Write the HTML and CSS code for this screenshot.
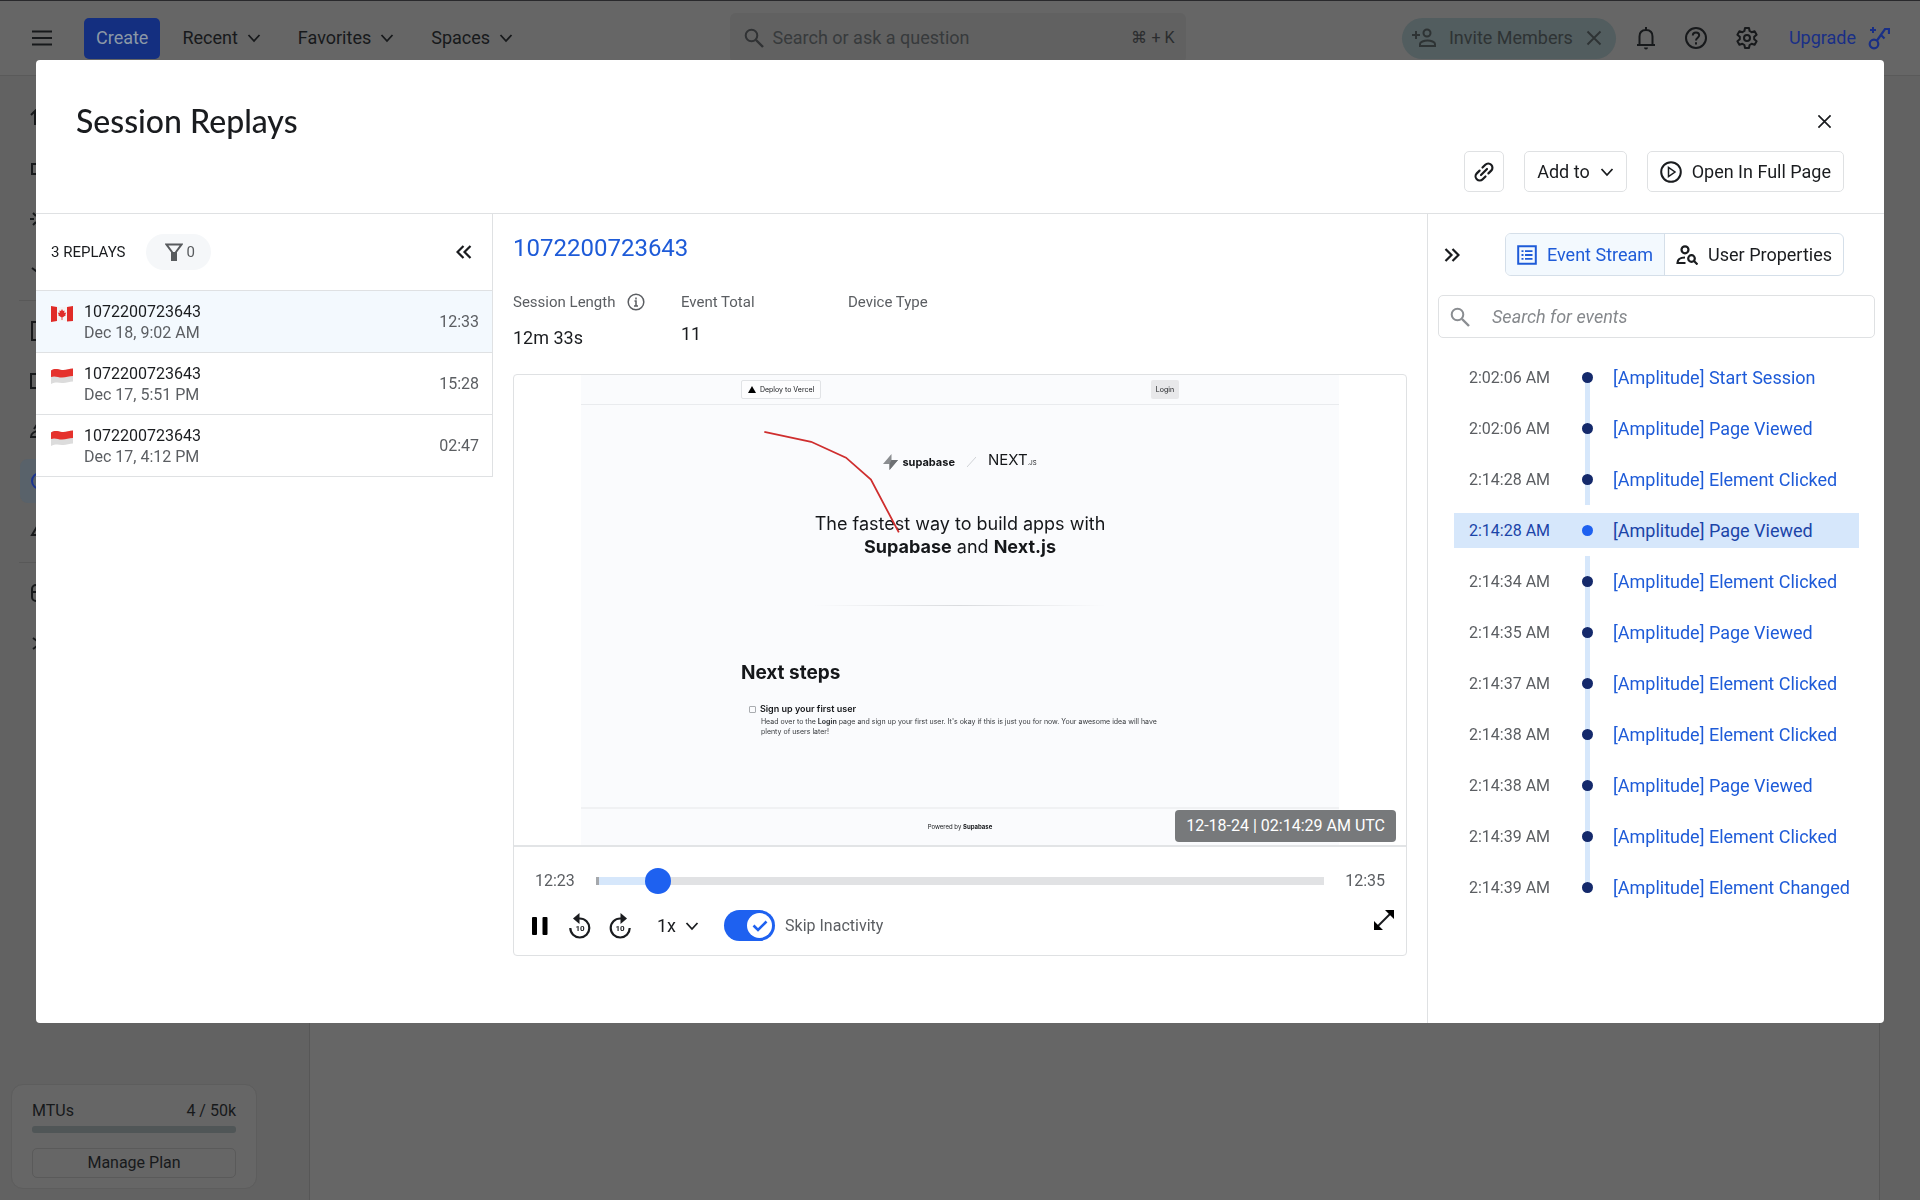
FILE: index.html
```html
<!DOCTYPE html>
<html lang="en">

<head>
    <meta charset="UTF-8">
    <meta name="viewport" content="width=device-width, initial-scale=1.0">
    <title>Session Replays</title>
    <link rel="stylesheet" href="styles.css">
</head>

<body>
    <!-- Shared icons -->
    <svg class="sprite" aria-hidden="true">
        <symbol id="chevron" viewBox="0 0 14 14"><path d="M1.500 4l5.500 6 5.500-6" fill="none" stroke="currentColor" stroke-width="1.800" /></symbol>
        <symbol id="cross" viewBox="0 0 16 16"><path d="M1.500 1.500l13 13M14.500 1.500l-13 13" fill="none" stroke="currentColor" stroke-width="1.800" /></symbol>
        <symbol id="search" viewBox="0 0 20 20"><circle cx="7.500" cy="7.500" r="5.800" fill="none" stroke="currentColor" stroke-width="2" /><path d="M12 12l7 7" stroke="currentColor" stroke-width="2.400" /></symbol>
        <symbol id="flag-id" viewBox="0 0 22 16">
            <path d="M0 2.500C4 0 7 1.500 11 2s7-1.500 11-1.500v13c-4 0-7 2-11 1.500S4 14 0 16z" fill="#dcdcdc" />
            <path d="M0 2.500C4 0 7 1.500 11 2s7-1.500 11-1.500V8c-4 0-7 1.500-11 1.500S4 7.500 0 9z" fill="#e5322d" />
        </symbol>
        <symbol id="ten" viewBox="0 0 24 26">
            <path d="M2.300 15a9.500 9.500 0 1 0 9.500-9.500H9" fill="none" stroke="currentColor" stroke-width="2.200" />
            <path d="M11.500 0v11L5 5.500z" fill="currentColor" />
        </symbol>
    </svg>

    <header class="topbar">
        <button class="icon-btn menu" aria-label="Menu">
            <svg width="20" height="16" viewBox="0 0 20 16"><path d="M0 1.500h20M0 8h20M0 14.500h20" stroke="currentColor" stroke-width="2" /></svg>
        </button>
        <button class="create">Create</button>
        <nav class="top-nav">
            <button>Recent <svg width="14" height="14"><use href="#chevron" /></svg></button>
            <button>Favorites <svg width="14" height="14"><use href="#chevron" /></svg></button>
            <button>Spaces <svg width="14" height="14"><use href="#chevron" /></svg></button>
        </nav>
        <div class="top-search">
            <svg width="20" height="20"><use href="#search" /></svg>
            <input type="text" aria-label="Search" placeholder="Search or ask a question">
            <span class="shortcut">⌘ + K</span>
        </div>
        <div class="top-actions">
            <div class="invite">
                <svg width="24" height="22" viewBox="0 0 24 22" fill="none" stroke="currentColor" stroke-width="2"><circle cx="15" cy="6" r="3.500" /><path d="M8 19v-2c0-2 4-3.500 7.500-3.500S23 15 23 17v2zM0 8h8M4 4v8" /></svg>
                <button>Invite Members</button>
                <button class="icon-btn" aria-label="Dismiss"><svg width="16" height="16"><use href="#cross" /></svg></button>
            </div>
            <button class="icon-btn" aria-label="Notifications">
                <svg width="22" height="24" viewBox="0 0 22 24" fill="none" stroke="currentColor" stroke-width="2"><path d="M2 19h18M4.500 19V10.500C4.500 6.500 7 4 11 4s6.500 2.500 6.500 6.500V19M11 1v3" /><path d="M9 21.500h4a2 2 0 0 1-4 0z" fill="currentColor" stroke="none" /></svg>
            </button>
            <button class="icon-btn" aria-label="Help">
                <svg width="24" height="24" viewBox="0 0 24 24" fill="none" stroke="currentColor" stroke-width="2"><circle cx="12" cy="12" r="10" /><path d="M8.800 9.500C8.800 7.500 10 6.500 12 6.500s3.200 1.200 3.200 2.800c0 2.200-3.200 2.600-3.200 5.200M12 16.200v2.200" /></svg>
            </button>
            <button class="icon-btn" aria-label="Settings">
                <svg width="24" height="24" viewBox="0 0 24 24" fill="none" stroke="currentColor" stroke-width="2" stroke-linejoin="round"><path d="M10 2h4l.6 3 2 1.200 3-1 2 3.500-2.400 2v2.600l2.400 2-2 3.500-3-1-2 1.200-.6 3h-4l-.6-3-2-1.200-3 1-2-3.500 2.400-2v-2.600l-2.400-2 2-3.500 3 1 2-1.200z" /><circle cx="12" cy="12" r="3" /></svg>
            </button>
            <a class="upgrade" href="#">Upgrade
                <svg width="22" height="24" viewBox="0 0 22 24" fill="none" stroke="currentColor" stroke-width="2.200"><circle cx="6" cy="18" r="4.300" /><path d="M9 14.500L17 3h4v5M13 9l3.500 3.500" /><path d="M5 1v6M2 4h6" stroke-width="2" /></svg>
            </a>
        </div>
    </header>

    <div class="page">
        <aside class="sidebar">
            <nav class="side-nav">
                <a href="#" aria-label="Project"><svg width="20" height="20" viewBox="0 0 20 20"><path d="M1 6l4-4v14M9 3h9v14H9z" /></svg></a>
                <a href="#" aria-label="Home"><svg width="20" height="20" viewBox="0 0 20 20"><path d="M2 5h16v10H2z" /></svg></a>
                <a href="#" aria-label="Explore"><svg width="20" height="20" viewBox="0 0 20 20"><path d="M0 10h4M3 4l3 3M3 16l3-3" /><circle cx="11" cy="10" r="4" /></svg></a>
                <a href="#" aria-label="Launch"><svg width="20" height="20" viewBox="0 0 20 20"><path d="M2 9l4 3 10-8" /></svg></a>
                <hr>
                <a href="#" aria-label="Dashboards"><svg width="20" height="20" viewBox="0 0 20 20"><path d="M2 1h16v18H2z" /></svg></a>
                <a href="#" aria-label="Content"><svg width="20" height="20" viewBox="0 0 20 20"><path d="M1 3h18v14H1z" /></svg></a>
                <a href="#" aria-label="Users"><svg width="20" height="20" viewBox="0 0 20 20"><path d="M1 16c0-4 4-6 8-6s8 2 8 6zM4 8l4-6" /></svg></a>
                <a class="active" href="#" aria-label="Session Replay"><svg width="20" height="20" viewBox="0 0 20 20"><circle cx="10" cy="10" r="8" /></svg></a>
                <a href="#" aria-label="Experiment"><svg width="20" height="20" viewBox="0 0 20 20"><path d="M2 14l6-10 6 10z" /></svg></a>
                <hr>
                <a href="#" aria-label="Data"><svg width="20" height="20" viewBox="0 0 20 20"><rect x="2" y="2" width="16" height="16" rx="4" /><path d="M2 9h16" /></svg></a>
                <a href="#" aria-label="Audiences"><svg width="20" height="20" viewBox="0 0 20 20"><path d="M3 5l4 3M3 16l4-3" /></svg></a>
            </nav>
            <div class="plan-card">
                <div class="plan-row"><span>MTUs</span><span>4 / 50k</span></div>
                <div class="plan-bar"></div>
                <button>Manage Plan</button>
            </div>
        </aside>
        <main class="content"></main>
    </div>

    <div class="overlay">
        <div class="modal" role="dialog" aria-label="Session Replays">
            <div class="modal-header">
                <div class="title-row">
                    <h1>Session Replays</h1>
                    <button class="icon-btn close" aria-label="Close"><svg width="15" height="15"><use href="#cross" /></svg></button>
                </div>
                <div class="header-actions">
                    <button class="btn link" aria-label="Copy link">
                        <svg width="20" height="20" viewBox="0 0 20 20" fill="none" stroke="currentColor" stroke-width="2.200" stroke-linecap="round"><path d="M8.500 5.500l2.800-2.800a4 4 0 0 1 5.900 5.900l-2.800 2.800M11.500 14.500l-2.800 2.800a4 4 0 0 1-5.900-5.900l2.800-2.800M7 13l6-6" /></svg>
                    </button>
                    <button class="btn">Add to <svg width="14" height="14"><use href="#chevron" /></svg></button>
                    <button class="btn">
                        <svg width="22" height="22" viewBox="0 0 22 22" fill="none" stroke="currentColor" stroke-width="2"><circle cx="11" cy="11" r="9.800" /><path d="M8.500 6.500v9l6.500-4.500z" stroke-width="1.500" /></svg>
                        Open In Full Page
                    </button>
                </div>
            </div>

            <div class="modal-body">
                <section class="replays">
                    <div class="replays-head">
                        <span>3 REPLAYS</span>
                        <button class="filter" aria-label="Filters">
                            <svg width="18" height="18" viewBox="0 0 18 18"><path d="M1.500 1.500h15L11 9v8H7V9z" fill="none" stroke="currentColor" stroke-width="2" /><path d="M7 9h4v8H7z" fill="currentColor" /></svg>0
                        </button>
                        <button class="icon-btn collapse" aria-label="Collapse list">
                            <svg width="16" height="14" viewBox="0 0 16 14"><path d="M7.500 1l-6 6 6 6M14.500 1l-6 6 6 6" fill="none" stroke="currentColor" stroke-width="2.200" /></svg>
                        </button>
                    </div>
                    <ul class="replay-list">
                        <li class="selected">
                            <svg class="flag" width="22" height="16" viewBox="0 0 22 16"><path d="M0 1h22v14H0z" fill="#f3f3f3" /><path d="M0 0l6 1v14l-6 1zM16 1l6-1v15l-6 .5z" fill="#e02b27" /><path d="M11 3l1 2 1.500-.5-.2 2.500 2-.5-1 2 .5.800-3 2h-.4V14h-.8v-2.700h-.4l-3-2 .5-.8-1-2 2 .5L8.500 4.500 10 5z" fill="#e02b27" /></svg>
                            <div class="who"><strong>1072200723643</strong><span>Dec 18, 9:02 AM</span></div>
                            <span class="length">12:33</span>
                        </li>
                        <li>
                            <svg class="flag" width="22" height="16"><use href="#flag-id" /></svg>
                            <div class="who"><strong>1072200723643</strong><span>Dec 17, 5:51 PM</span></div>
                            <span class="length">15:28</span>
                        </li>
                        <li>
                            <svg class="flag" width="22" height="16"><use href="#flag-id" /></svg>
                            <div class="who"><strong>1072200723643</strong><span>Dec 17, 4:12 PM</span></div>
                            <span class="length">02:47</span>
                        </li>
                    </ul>
                </section>

                <section class="detail">
                    <h2><a href="#">1072200723643</a></h2>
                    <dl class="stats">
                        <div>
                            <dt class="with-info">Session Length
                                <svg width="18" height="18" viewBox="0 0 18 18" fill="none" stroke="currentColor" stroke-width="1.500"><circle cx="9" cy="9" r="7.800" /><path d="M7.500 8H9v5M7 13h4M9 4.500v2" /></svg>
                            </dt>
                            <dd>12m 33s</dd>
                        </div>
                        <div><dt>Event Total</dt><dd>11</dd></div>
                        <div><dt>Device Type</dt></div>
                    </dl>

                    <div class="player">
                        <div class="stage">
                            <div class="site">
                                <div class="site-top">
                                    <button class="deploy"><svg width="8" height="7" viewBox="0 0 8 7"><path d="M4 0l4 7H0z" /></svg>Deploy to Vercel</button>
                                    <button class="login">Login</button>
                                </div>
                                <div class="site-main">
                                    <div class="logos">
                                        <svg width="15" height="16" viewBox="0 0 15 16"><path d="M8.500 0v6H15L6.500 16v-6H0z" fill="#8a8d90" /><path d="M8.500 6H15L6.500 16v-6z" fill="#6d7073" /></svg>
                                        <b>supabase</b>
                                        <svg class="slash" width="9" height="10" viewBox="0 0 9 10"><path d="M0 10l9-10" stroke="#cfd2d6" /></svg>
                                        <span class="next">NEXT<small>.JS</small></span>
                                    </div>
                                    <p class="tagline">The fastest way to build apps with <b>Supabase</b> and <b>Next.js</b></p>
                                    <div class="rule"></div>
                                    <div class="steps">
                                        <h3>Next steps</h3>
                                        <label><input type="checkbox">Sign up your first user</label>
                                        <p>Head over to the <b>Login</b> page and sign up your first user. It's okay if this is just you for now. Your awesome idea will have plenty of users later!</p>
                                    </div>
                                </div>
                                <div class="site-foot">Powered by <b>Supabase</b></div>
                                <svg class="trail" viewBox="0 0 761 468"><path d="M184 57l47 10 35 16 25 22 28 53" fill="none" stroke="#cf2e2e" stroke-width="1.800" /></svg>
                            </div>
                            <div class="stamp">12-18-24 | 02:14:29 AM UTC</div>
                        </div>
                        <div class="controls">
                            <div class="timeline">
                                <span>12:23</span>
                                <input type="range" min="0" max="100" value="7" aria-label="Playback position">
                                <span>12:35</span>
                            </div>
                            <div class="buttons">
                                <button class="icon-btn" aria-label="Pause"><svg width="20" height="18" viewBox="0 0 20 18"><rect width="5" height="18" rx="1" /><rect x="10.500" width="5" height="18" rx="1" /></svg></button>
                                <button class="icon-btn seek" aria-label="Back 10 seconds">
                                    <svg width="24" height="26"><use href="#ten" /></svg><span>10</span>
                                </button>
                                <button class="icon-btn seek" aria-label="Forward 10 seconds">
                                    <svg class="flip" width="24" height="26"><use href="#ten" /></svg><span>10</span>
                                </button>
                                <button class="speed">1x <svg width="14" height="14"><use href="#chevron" /></svg></button>
                                <label class="toggle">
                                    <input type="checkbox" checked>
                                    <span class="switch"><span class="knob"><svg width="16" height="12" viewBox="0 0 16 12"><path d="M1.500 5.500l4.500 4.500L14.500 1.500" fill="none" stroke="#1e61f0" stroke-width="2.600" /></svg></span></span>
                                    Skip Inactivity
                                </label>
                                <button class="icon-btn expand" aria-label="Fullscreen"><svg width="20" height="20" viewBox="0 0 20 20"><path d="M3 17L17 3" stroke="currentColor" stroke-width="2" /><path d="M11 0h9v9zM0 11v9h9z" /></svg></button>
                            </div>
                        </div>
                    </div>
                </section>

                <section class="events">
                    <div class="events-head">
                        <button class="icon-btn" aria-label="Collapse events">
                            <svg width="16" height="14" viewBox="0 0 16 14"><path d="M1.500 1l6 6-6 6M8.500 1l6 6-6 6" fill="none" stroke="currentColor" stroke-width="2.200" /></svg>
                        </button>
                        <div class="tabs">
                            <button class="active">
                                <svg width="20" height="20" viewBox="0 0 20 20" fill="none" stroke="currentColor" stroke-width="2"><path d="M1.200 1.200h17.600v17.600H1.200z" /><path d="M4.500 6.200h2M8 6.200h7.500M4.500 10h2M8 10h7.500M4.500 13.800h2M8 13.800h7.500" stroke-width="1.800" /></svg>
                                Event Stream
                            </button>
                            <button>
                                <svg width="22" height="20" viewBox="0 0 22 20" fill="none" stroke="currentColor" stroke-width="2.200"><circle cx="9" cy="4.800" r="3.500" /><circle cx="15.500" cy="13.500" r="3.300" /><path d="M18 16l3.500 3.500M9.500 18H1.500c0-4 3.500-5.500 7.500-5.500" /></svg>
                                User Properties
                            </button>
                        </div>
                    </div>
                    <div class="event-search">
                        <svg width="20" height="20"><use href="#search" /></svg>
                        <input type="text" aria-label="Search for events" placeholder="Search for events">
                    </div>
                    <ol class="event-list">
                        <li><time>2:02:06 AM</time><i></i><a href="#">[Amplitude] Start Session</a></li>
                        <li><time>2:02:06 AM</time><i></i><a href="#">[Amplitude] Page Viewed</a></li>
                        <li><time>2:14:28 AM</time><i></i><a href="#">[Amplitude] Element Clicked</a></li>
                        <li class="current"><time>2:14:28 AM</time><i></i><a href="#">[Amplitude] Page Viewed</a></li>
                        <li><time>2:14:34 AM</time><i></i><a href="#">[Amplitude] Element Clicked</a></li>
                        <li><time>2:14:35 AM</time><i></i><a href="#">[Amplitude] Page Viewed</a></li>
                        <li><time>2:14:37 AM</time><i></i><a href="#">[Amplitude] Element Clicked</a></li>
                        <li><time>2:14:38 AM</time><i></i><a href="#">[Amplitude] Element Clicked</a></li>
                        <li><time>2:14:38 AM</time><i></i><a href="#">[Amplitude] Page Viewed</a></li>
                        <li><time>2:14:39 AM</time><i></i><a href="#">[Amplitude] Element Clicked</a></li>
                        <li><time>2:14:39 AM</time><i></i><a href="#">[Amplitude] Element Changed</a></li>
                    </ol>
                </section>
            </div>
        </div>
    </div>
</body>

</html>
```
FILE: styles.css
```css
* {
    margin: 0;
    padding: 0;
    box-sizing: border-box;
}

body {
    min-height: 100vh;
    display: flex;
    flex-direction: column;
    background-color: #666;
    color: #17191b;
    font-family: Roboto, "Noto Sans", sans-serif;
    font-size: 18px;
    line-height: 24px;
}

button,
input {
    font: inherit;
    color: inherit;
    background: none;
    border: none;
}

button {
    display: inline-flex;
    align-items: center;
    cursor: pointer;
}

input {
    outline: none;
    min-width: 0;
}

a {
    color: inherit;
    text-decoration: none;
}

ul,
ol {
    list-style: none;
}

svg {
    flex-shrink: 0;
}

.sprite {
    position: absolute;
    width: 0;
    height: 0;
}

.icon-btn {
    justify-content: center;
}

/* Page behind the dialog, already dimmed */
.topbar {
    height: 76px;
    display: flex;
    align-items: center;
    padding: 0 30px 0 32px;
    border-top: 1px solid #29292c;
    border-bottom: 1px solid #5a5a5a;
}

.create {
    height: 41px;
    padding: 0 12px;
    margin-left: 32px;
    border-radius: 5px;
    background-color: #142f80;
    color: #8b98a6;
}

.top-nav {
    display: flex;
    gap: 37px;
    margin-left: 22px;
}

.top-nav button {
    gap: 9px;
}

.top-search {
    width: 456px;
    height: 50px;
    display: flex;
    align-items: center;
    gap: 9px;
    padding: 0 11px 0 14px;
    margin-left: auto;
    border-radius: 6px;
    background-color: #616161;
    color: #303234;
}

.top-search input {
    flex: 1;
}

.top-search input::placeholder {
    color: #373a3c;
    opacity: 1;
}

.shortcut {
    color: #2a2c2e;
    font-size: 16px;
}

.top-actions {
    display: flex;
    align-items: center;
    gap: 27px;
    margin-left: auto;
}

.invite {
    height: 41px;
    display: flex;
    align-items: center;
    gap: 13px;
    padding: 0 14px 0 10px;
    margin-right: -8px;
    border-radius: 21px;
    background-color: #525d5f;
    color: #2e3334;
}

.upgrade {
    display: flex;
    align-items: center;
    gap: 12px;
    margin-left: 3px;
    color: #192f86;
}

.page {
    flex: 1;
    display: grid;
    grid-template-columns: 310px 1fr;
    padding-right: 40px;
    background-color: #626262;
}

.sidebar {
    display: flex;
    flex-direction: column;
    justify-content: space-between;
    padding: 19px 52px 11px 11px;
    border-right: 1px solid #575757;
}

.content {
    background-color: #666;
    border-right: 1px solid #575757;
}

.side-nav {
    display: flex;
    flex-direction: column;
}

.side-nav a {
    height: 44px;
    display: flex;
    align-items: center;
    padding-left: 10px;
    margin: 2px 0 4px 9px;
    border-radius: 8px;
}

.side-nav svg {
    fill: none;
    stroke: currentColor;
    stroke-width: 2;
}

.side-nav .active {
    background-color: #59626a;
    color: #1b3490;
}

.side-nav hr {
    border: none;
    border-top: 1px solid #585858;
    margin: 5px 8px 6px;
}

.plan-card {
    padding: 14px 20px 10px;
    border: 1px solid #5d5d5d;
    border-radius: 12px;
    background-color: #666;
    font-size: 16px;
}

.plan-row {
    display: flex;
    justify-content: space-between;
}

.plan-bar {
    height: 7px;
    margin: 3px 0 15px;
    border-radius: 3px;
    background-color: #505657;
}

.plan-card button {
    width: 100%;
    height: 30px;
    justify-content: center;
    border: 1px solid #5a5a5a;
    border-radius: 5px;
}

/* Dialog */
.overlay {
    position: fixed;
    inset: 0;
    display: flex;
    padding: 60px 36px 177px;
}

.modal {
    flex: 1;
    display: flex;
    flex-direction: column;
    border-radius: 4px;
    background-color: #fff;
    color: #1a1c1f;
    overflow: hidden;
}

.modal-header {
    padding: 41px 40px 21px;
    border-bottom: 1px solid #dfe1e3;
}

.title-row {
    display: flex;
    justify-content: space-between;
    align-items: center;
    margin-bottom: 10px;
}

.title-row h1 {
    font-family: Lato, sans-serif;
    font-size: 32px;
    font-weight: 500;
    line-height: 40px;
}

.close {
    width: 40px;
    height: 40px;
}

.header-actions {
    display: flex;
    justify-content: flex-end;
    gap: 20px;
}

.btn {
    height: 41px;
    gap: 10px;
    padding: 0 12px;
    border: 1px solid #dfe1e3;
    border-radius: 5px;
}

.link {
    padding: 0 9px;
}

.modal-body {
    flex: 1;
    display: grid;
    grid-template-columns: 457px 1fr 457px;
}

/* Replay list */
.replays {
    align-self: start;
    border-right: 1px solid #dfe1e3;
    font-size: 16px;
}

.replays-head {
    height: 77px;
    display: flex;
    align-items: center;
    gap: 20px;
    padding: 0 20px 0 15px;
    border-bottom: 1px solid #dfe1e3;
    font-size: 15px;
}

.filter {
    height: 36px;
    gap: 4px;
    padding: 0 16px 0 19px;
    border-radius: 18px;
    background-color: #f5f7f9;
    color: #585b5e;
}

.collapse {
    margin-left: auto;
}

.replay-list li {
    display: flex;
    align-items: center;
    gap: 11px;
    padding: 10px 13px 9px 15px;
    border-bottom: 1px solid #dfe1e3;
}

.replay-list .selected {
    background-color: #f3f9fe;
}

.flag {
    align-self: flex-start;
    margin-top: 5px;
}

.who {
    flex: 1;
    display: flex;
    flex-direction: column;
    line-height: 21px;
}

.who strong {
    font-weight: 400;
}

.who span,
.length {
    color: #5b5e62;
}

/* Replay detail */
.detail {
    padding: 18px 20px;
}

.detail h2 {
    font-size: 24px;
    font-weight: 400;
    line-height: 32px;
    color: #1e5bd8;
}

.stats {
    display: grid;
    grid-template-columns: 148px 147px 148px;
    gap: 20px;
    margin: 26px 0 24px;
}

.stats dt {
    display: flex;
    align-items: center;
    gap: 12px;
    font-size: 15px;
    color: #5b5e62;
    white-space: nowrap;
}

.stats .with-info {
    padding-bottom: 4px;
}

.stats dd {
    margin-top: 8px;
}

.player {
    border: 1px solid #dfe1e3;
    border-radius: 4px;
}

.stage {
    position: relative;
    display: flex;
    justify-content: center;
    border-bottom: 2px solid #e2e4e6;
}

.stamp {
    position: absolute;
    right: 10px;
    bottom: 3px;
    padding: 4px 11px;
    border-radius: 4px;
    background-color: #77797b;
    color: #fff;
    font-size: 16px;
}

/* Recorded site */
.site {
    position: relative;
    width: 85%;
    background-color: #fafbfd;
    color: #15171a;
    font-family: Inter, sans-serif;
    font-size: 7px;
    line-height: 10px;
}

.trail {
    position: absolute;
    inset: 0;
    width: 100%;
}

.site-top {
    height: 30px;
    display: flex;
    justify-content: space-between;
    align-items: center;
    padding: 0 160px;
    border-bottom: 1px solid #e9ebee;
}

.site-top button {
    height: 19px;
    border-radius: 2px;
}

.deploy {
    gap: 4px;
    padding: 0 6px;
    border: 1px solid #e1e3e6;
    background-color: #fdfdfe;
}

.login {
    padding: 0 5px;
    background-color: #e8e8ea;
}

.site-main {
    display: flex;
    flex-direction: column;
    align-items: center;
    padding: 47px 160px 0;
}

.logos {
    display: flex;
    align-items: center;
    gap: 4px;
    font-size: 11px;
    line-height: 16px;
}

.slash {
    margin: 0 8px;
}

.next {
    font-size: 15px;
}

.next small {
    font-size: 6px;
}

.tagline {
    width: 304px;
    margin-top: 41px;
    font-size: 18px;
    line-height: 23px;
    text-align: center;
}

.rule {
    width: 292px;
    height: 1px;
    margin: 47px 0 55px;
    background: linear-gradient(90deg, transparent, #d9dbde, transparent);
}

.steps {
    width: 100%;
}

.steps h3 {
    font-size: 19px;
    line-height: 24px;
    margin-bottom: 18px;
}

.steps label {
    display: flex;
    align-items: center;
    gap: 4px;
    padding-left: 8px;
    font-size: 9px;
    font-weight: 600;
    line-height: 12px;
}

.steps input {
    appearance: none;
    width: 7px;
    height: 7px;
    border: 1px solid #a9acb0;
    border-radius: 1px;
}

.steps p {
    padding: 2px 10px 0 20px;
    color: #36393d;
}

.site-foot {
    margin-top: 70px;
    padding: 14px;
    border-top: 2px solid #f0f1f3;
    font-size: 6px;
    line-height: 8px;
    text-align: center;
}

/* Player controls */
.controls {
    padding: 21px 12px 14px 18px;
}

.timeline {
    display: flex;
    align-items: center;
    gap: 21px;
    padding: 0 9px 0 3px;
    font-size: 16px;
    color: #5b5e62;
}

.timeline input {
    flex: 1;
    height: 26px;
    appearance: none;
    background: linear-gradient(90deg, #a5a8ac 3px, #d6e7fb 3px, #d6e7fb 7%, #e1e2e4 7%) center / 100% 8px no-repeat;
}

.timeline input::-webkit-slider-thumb {
    appearance: none;
    width: 26px;
    height: 26px;
    border-radius: 50%;
    background-color: #1e61f0;
}

.buttons {
    display: flex;
    align-items: center;
    margin-top: 16px;
}

.seek {
    position: relative;
    margin-left: 16px;
}

.seek span {
    position: absolute;
    inset: 11px 0 auto;
    font-size: 8px;
    font-weight: 700;
    line-height: 10px;
}

.flip {
    transform: scaleX(-1);
}

.speed {
    gap: 9px;
    margin-left: 25px;
}

.toggle {
    display: flex;
    align-items: center;
    gap: 10px;
    margin-left: 25px;
    font-size: 16px;
    color: #5b5e62;
}

.toggle input {
    position: absolute;
    opacity: 0;
}

.switch {
    width: 51px;
    height: 31px;
    display: flex;
    padding: 3px;
    border-radius: 16px;
    background-color: #1e61f0;
}

.knob {
    width: 25px;
    height: 25px;
    display: flex;
    align-items: center;
    justify-content: center;
    margin-left: auto;
    border-radius: 50%;
    background-color: #fff;
}

.expand {
    align-self: flex-start;
    margin-left: auto;
}

/* Events */
.events {
    padding: 19px 9px 0 10px;
    border-left: 1px solid #dfe1e3;
}

.events-head {
    display: flex;
    align-items: center;
    justify-content: space-between;
    padding: 0 31px 0 6px;
}

.tabs {
    display: flex;
    border: 1px solid #d5dfe9;
    border-radius: 6px;
    overflow: hidden;
}

.tabs button {
    height: 41px;
    gap: 10px;
    padding: 0 11px;
}

.tabs .active {
    border-right: 1px solid #d5dfe9;
    background-color: #f3f9fe;
    color: #1e5bd8;
}

.event-search {
    height: 43px;
    display: flex;
    align-items: center;
    gap: 22px;
    padding: 0 11px;
    margin-top: 19px;
    border: 1px solid #dfe1e3;
    border-radius: 5px;
    color: #8a8d91;
}

.event-search input {
    flex: 1;
}

.event-search input::placeholder {
    color: #85888c;
    font-style: italic;
    opacity: 1;
}

.event-list {
    margin: 14px 16px 0;
}

.event-list li {
    position: relative;
    height: 51px;
    display: flex;
    align-items: center;
}

.event-list li::before {
    content: "";
    position: absolute;
    left: 131px;
    top: 0;
    bottom: 0;
    width: 5px;
    background-color: #d6e7fb;
}

.event-list li:first-child::before {
    top: 50%;
}

.event-list li:last-child::before {
    bottom: 50%;
}

/* The current row swaps its connector for a highlight band */
.event-list .current::before {
    left: 0;
    top: 8px;
    bottom: 8px;
    width: 100%;
}

.event-list time {
    position: relative;
    width: 128px;
    padding-left: 15px;
    font-size: 16px;
    color: #5b5e62;
}

.event-list i {
    position: relative;
    width: 11px;
    height: 11px;
    border-radius: 50%;
    background-color: #14296b;
}

.event-list a {
    position: relative;
    margin-left: 20px;
    color: #1e5bd8;
}

.event-list .current time,
.event-list .current a {
    color: #1b44a8;
}

.event-list .current i {
    background-color: #1e61f0;
}
```
